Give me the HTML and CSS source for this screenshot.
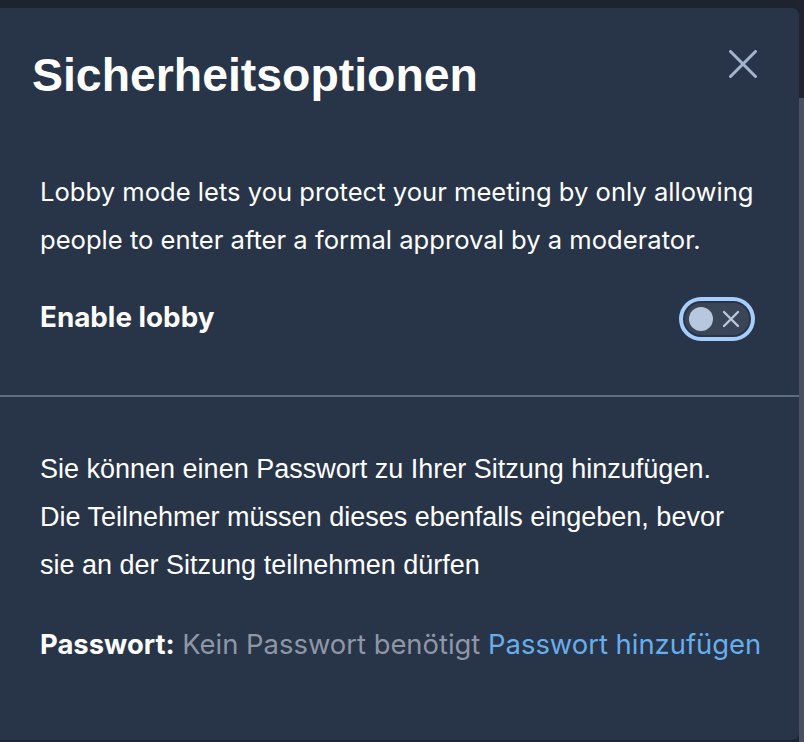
FILE: index.html
```html
<!DOCTYPE html>
<html lang="de">

<head>
    <meta charset="UTF-8">
    <meta name="viewport" content="width=device-width, initial-scale=1.0">
    <title>Sicherheitsoptionen</title>
    <link rel="stylesheet" href="styles.css">
</head>

<body>
    <div class="dialog">
        <div class="dialog-header">
            <h1>Sicherheitsoptionen</h1>
            <button class="close-btn" aria-label="Schließen">
                <svg width="28" height="28" viewBox="0 0 28 28">
                    <path d="M1.5 1.5 L26.5 26.5 M26.5 1.5 L1.5 26.5" stroke="#a4b6cf" stroke-width="3" stroke-linecap="round" fill="none" />
                </svg>
            </button>
        </div>

        <div class="section lobby-section">
            <p class="lobby-text">Lobby mode lets you protect your meeting by only allowing people to enter after a formal approval by a moderator.</p>
            <div class="toggle-row">
                <span class="toggle-label">Enable lobby</span>
                <div class="toggle">
                    <span class="knob"></span>
                    <svg class="toggle-x" width="18" height="18" viewBox="0 0 18 18">
                        <path d="M2 2 L16 16 M16 2 L2 16" stroke="#b7c7de" stroke-width="2.4" stroke-linecap="round" fill="none" />
                    </svg>
                </div>
            </div>
        </div>

        <div class="divider"></div>

        <div class="section password-section">
            <p class="password-text">Sie können einen Passwort zu Ihrer Sitzung hinzufügen.<br>Die Teilnehmer müssen dieses ebenfalls eingeben, bevor<br>sie an der Sitzung teilnehmen dürfen</p>
            <div class="password-row">
                <strong>Passwort:</strong>
                <span class="muted">Kein Passwort benötigt</span>
                <a href="#" class="add-link">Passwort hinzufügen</a>
            </div>
        </div>
    </div>
    <div class="scrollbar"></div>
</body>

</html>
```

FILE: styles.css
```css
body {
    margin: 0;
    background-color: #1e2330;
    display: flex;
    align-items: flex-start;
    height: 742px;
    overflow: hidden;
}

/* het dialoogvenster */
.dialog {
    width: 799px;
    height: 732px;
    margin-top: 8px;
    background-color: #283448;
    border-radius: 0 7px 7px 0;
    color: #ffffff;
    box-sizing: border-box;
}

.scrollbar {
    width: 5px;
    height: 742px;
    background: linear-gradient(#1f2430 98px, #4b5060 98px);
}

.dialog-header {
    display: flex;
    justify-content: space-between;
    align-items: flex-start;
    padding: 40px 42px 0 32px;
}

h1 {
    margin: 0;
    font-family: "Liberation Sans", Arial, sans-serif;
    font-size: 46.4px;
    font-weight: bold;
    line-height: 55px;
}

.close-btn {
    background: none;
    border: none;
    padding: 0;
    margin-top: 2px;
    cursor: pointer;
    width: 28px;
    height: 28px;
}

.section {
    padding: 0 30px 0 40px;
}

.lobby-section {
    padding-top: 65px;
    padding-bottom: 53px;
}

.lobby-text {
    margin: 0;
    font-family: Inter, sans-serif;
    font-size: 25.6px;
    line-height: 48px;
}

.toggle-row {
    display: flex;
    justify-content: space-between;
    align-items: center;
    margin-top: 31px;
    height: 47px;
}

.toggle-label {
    font-family: Inter, sans-serif;
    font-size: 27.8px;
    font-weight: 700;
    margin-top: -3px;
}

.toggle {
    position: relative;
    width: 64px;
    height: 32px;
    margin-right: 20px;
    border-radius: 16px;
    background-color: #3a4558;
    box-shadow: 0 0 0 2px #283448, 0 0 0 6px #a7cdf9;
    display: flex;
    align-items: center;
    justify-content: space-between;
    padding: 0 9px 0 4px;
    box-sizing: border-box;
}

.knob {
    width: 24px;
    height: 24px;
    border-radius: 50%;
    background-color: #b7c7de;
}

.divider {
    height: 2px;
    background-color: #5f6d82;
}

.password-section {
    padding-top: 48px;
}

.password-text {
    margin: 0;
    font-family: "Liberation Sans", Arial, sans-serif;
    font-size: 27px;
    line-height: 48px;
}

.password-row {
    margin-top: 31px;
    font-family: Inter, sans-serif;
    font-size: 27.4px;
    line-height: 48px;
}

.password-row strong {
    font-weight: 700;
}

.muted {
    color: #8f97a4;
}

.add-link {
    color: #68aeea;
    text-decoration: none;
}
```
